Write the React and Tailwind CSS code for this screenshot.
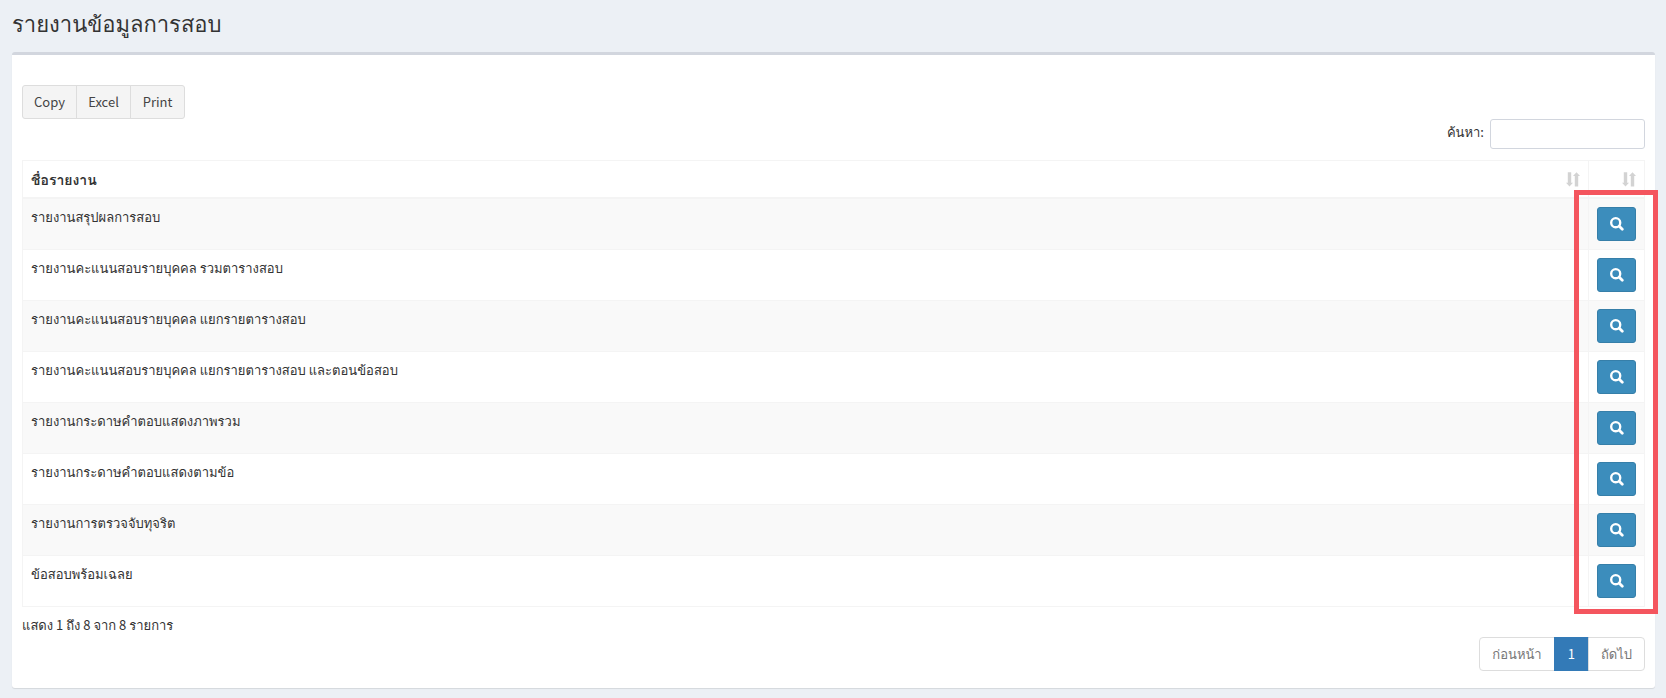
import React from 'react';

const reports = [
  'รายงานสรุปผลการสอบ',
  'รายงานคะแนนสอบรายบุคคล รวมตารางสอบ',
  'รายงานคะแนนสอบรายบุคคล แยกรายตารางสอบ',
  'รายงานคะแนนสอบรายบุคคล แยกรายตารางสอบ และตอนข้อสอบ',
  'รายงานกระดาษคำตอบแสดงภาพรวม',
  'รายงานกระดาษคำตอบแสดงตามข้อ',
  'รายงานการตรวจจับทุจริต',
  'ข้อสอบพร้อมเฉลย',
];

const SortIcon = () => (
  <svg viewBox="0 0 14 15" className="w-[14px] h-[15px] fill-[#d3d3d3]" aria-hidden="true">
    <path d="M1.800 0.300h3.400v10.500h1.800L3.500 14.600 0 10.800H1.800z" />
    <path d="M8.800 14.600h3.400V4.100h1.800L10.500 0.300 7 4.100H8.800z" />
  </svg>
);

const SearchIcon = () => (
  <svg viewBox="0 0 13 13" className="w-[14px] h-[14px]" fill="none" stroke="white" aria-hidden="true">
    <circle cx="5.300" cy="5.300" r="4.200" strokeWidth="2.200" />
    <path d="M8.600 8.600l2.800 2.800" strokeWidth="2.600" strokeLinecap="round" />
  </svg>
);

const App = () => {
  return (
    <div className="min-h-screen bg-[#ecf0f5] pl-3 pr-[11px] pt-2 pb-2 text-[13px] leading-5 text-[#333] font-['Noto_Sans_CJK_SC','Loma',sans-serif]">
      <h1 className="text-[22px] leading-7 mb-4">รายงานข้อมูลการสอบ</h1>

      <main className="bg-white rounded-[3px] border-t-[3px] border-[#d2d6de] shadow-[0_1px_1px_rgba(0,0,0,0.1)] px-[10px] pt-[30px] pb-[17px]">
        <div className="flex text-[#444]">
          <button className="h-[34px] min-w-[55px] px-[11px] border border-[#ddd] bg-[#f4f4f4] rounded-l-[3px]">Copy</button>
          <button className="h-[34px] min-w-[55px] px-[11px] border border-[#ddd] bg-[#f4f4f4] -ml-px">Excel</button>
          <button className="h-[34px] min-w-[55px] px-[11px] border border-[#ddd] bg-[#f4f4f4] -ml-px rounded-r-[3px]">Print</button>
        </div>

        <div className="flex justify-end items-start">
          <label htmlFor="search" className="leading-[26px]">ค้นหา:</label>
          <input
            id="search"
            type="search"
            className="w-[155px] h-[30px] ml-[6px] px-[10px] border border-[#d2d6de] rounded-[3px] bg-white"
          />
        </div>

        <div className="relative mt-[11px]">
          <table className="w-full border-separate border-spacing-0 border-t border-l border-[#f4f4f4]">
            <thead>
              <tr>
                <th className="p-2 text-left text-sm leading-5 font-bold border-r border-b-2 border-[#f4f4f4]">
                  <div className="flex items-center justify-between">
                    <span>ชื่อรายงาน</span>
                    <SortIcon />
                  </div>
                </th>
                <th className="w-[56px] p-2 border-r border-b-2 border-[#f4f4f4]">
                  <div className="flex justify-end">
                    <SortIcon />
                  </div>
                </th>
              </tr>
            </thead>
            <tbody>
              {reports.map((name) => (
                <tr key={name} className="odd:bg-[#f9f9f9]">
                  <td className="p-2 align-top border-r border-b border-[#f4f4f4]">{name}</td>
                  <td className="p-2 border-r border-b border-[#f4f4f4]">
                    <button
                      aria-label={name}
                      className="flex items-center justify-center w-[39px] h-[34px] rounded-[3px] border border-[#367fa9] bg-[#3c8dbc]"
                    >
                      <SearchIcon />
                    </button>
                  </td>
                </tr>
              ))}
            </tbody>
          </table>
          {/* highlight around the action column */}
          <div className="absolute top-[30px] -bottom-[7px] -right-[13px] w-[84px] border-[5px] border-[#f4555e] pointer-events-none" />
        </div>

        <p className="pt-2">แสดง 1 ถึง 8 จาก 8 รายการ</p>

        <nav className="flex justify-end mt-[2px] text-[#777]">
          <a href="#prev" className="h-[34px] px-3 py-[6px] border border-[#ddd] rounded-l">ก่อนหน้า</a>
          <a href="#1" className="h-[34px] px-[13px] py-[6px] border border-[#337ab7] bg-[#337ab7] text-white -ml-px">1</a>
          <a href="#next" className="h-[34px] px-3 py-[6px] border border-[#ddd] rounded-r -ml-px">ถัดไป</a>
        </nav>
      </main>
    </div>
  );
};

export default App;
